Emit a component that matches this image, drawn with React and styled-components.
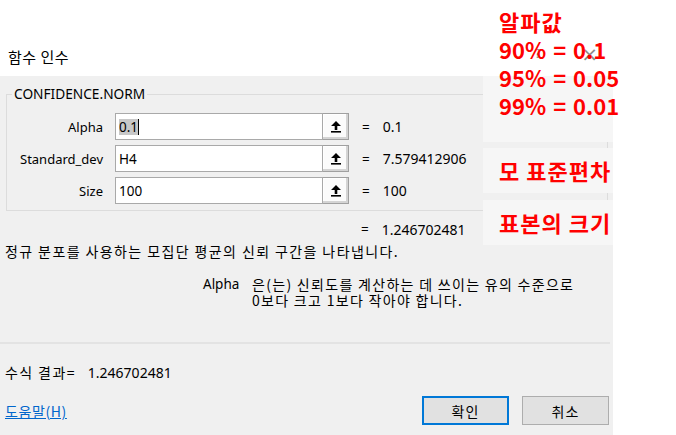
import React from "react";
import styled, { createGlobalStyle } from "styled-components";

const GlobalStyle = createGlobalStyle`
  html, body {
    margin: 0;
    padding: 0;
    background: #ffffff;
  }
  body {
    font-family: "Noto Sans", "Noto Sans CJK KR", sans-serif;
    font-size: 13px;
    color: #000000;
  }
`;

const args = [
  { label: "Alpha", input: "0.1", value: "0.1", selected: true },
  { label: "Standard_dev", input: "H4", value: "7.579412906" },
  { label: "Size", input: "100", value: "100" },
];

const ArrowIcon = () => (
  <svg width="12" height="13" viewBox="0 0 12 13">
    <path d="M6 1 L11 6 L7.3 6 L7.3 10 L4.7 10 L4.7 6 L1 6 Z" fill="#000" />
    <rect x="1" y="11" width="10" height="1.6" fill="#000" />
  </svg>
);

const App = () => {
  return (
    <React.Fragment>
      <GlobalStyle />
      <Page>
        <Dialog>
          <TitleBar>
            <Title>함수 인수</Title>
            <TitleButtons>
              <TitleIcon>?</TitleIcon>
              <TitleIcon $close>×</TitleIcon>
            </TitleButtons>
          </TitleBar>
          <Body>
            <GroupBox>
              <Legend>CONFIDENCE.NORM</Legend>
              <Rows>
                {args.map((a) => (
                  <ArgRow key={a.label}>
                    <ArgLabel>{a.label}</ArgLabel>
                    <InputBox>
                      <InputText $selected={a.selected}>{a.input}</InputText>
                      {a.selected && <Caret />}
                    </InputBox>
                    <RefButton>
                      <ArrowIcon />
                    </RefButton>
                    <Equals>=</Equals>
                    <ArgValue>{a.value}</ArgValue>
                  </ArgRow>
                ))}
              </Rows>
            </GroupBox>
            <ResultRow>
              <Equals>=</Equals>
              <ArgValue>1.246702481</ArgValue>
            </ResultRow>
            <Description>정규 분포를 사용하는 모집단 평균의 신뢰 구간을 나타냅니다.</Description>
            <HelpBlock>
              <HelpName>Alpha</HelpName>
              <HelpText>
                은(는) 신뢰도를 계산하는 데 쓰이는 유의 수준으로
                <br />
                0보다 크고 1보다 작아야 합니다.
              </HelpText>
            </HelpBlock>
            <Separator />
            <FormulaResult>
              수식 결과=<FormulaValue>1.246702481</FormulaValue>
            </FormulaResult>
            <Footer>
              <HelpLink href="#">도움말(H)</HelpLink>
              <Buttons>
                <DialogButton $primary>확인</DialogButton>
                <DialogButton>취소</DialogButton>
              </Buttons>
            </Footer>
          </Body>
        </Dialog>

        <NoteBox style={{ top: 76, height: 66 }} />
        <NoteBox style={{ top: 148, height: 45 }} />
        <NoteBox style={{ top: 200, height: 45 }} />

        <Notes style={{ top: 7 }}>
          <NoteLine>알파값</NoteLine>
          <NoteLine $numbers>90% = 0.1</NoteLine>
          <NoteLine $numbers>95% = 0.05</NoteLine>
          <NoteLine $numbers>99% = 0.01</NoteLine>
        </Notes>
        <Notes style={{ top: 156 }}>
          <NoteLine>모 표준편차</NoteLine>
        </Notes>
        <Notes style={{ top: 208 }}>
          <NoteLine>표본의 크기</NoteLine>
        </Notes>
      </Page>
    </React.Fragment>
  );
};

// Styled components
const Page = styled.div`
  position: relative;
  width: 676px;
  height: 435px;
  overflow: hidden;
  background: #ffffff;
`;

const Dialog = styled.div`
  width: 613px;
  height: 435px;
  display: flex;
  flex-direction: column;
`;

const TitleBar = styled.div`
  height: 76px;
  box-sizing: border-box;
  display: flex;
  align-items: flex-end;
  padding: 0 0 9px 8px;
  background: #ffffff;
`;

const Title = styled.div`
  font-family: "Noto Sans CJK KR", sans-serif;
  font-size: 15px;
  letter-spacing: 0.5px;
  line-height: 20px;
`;

const TitleButtons = styled.div`
  margin-left: auto;
  display: flex;
  gap: 40px;
  padding-right: 15px;
  margin-bottom: 4px;
`;

const TitleIcon = styled.span`
  font-family: "DejaVu Sans", sans-serif;
  font-size: ${(p) => (p.$close ? "20px" : "13px")};
  line-height: 18px;
  color: #8a8a8a;
`;

const Body = styled.div`
  flex: 1;
  background: #f0f0f0;
  display: flex;
  flex-direction: column;
  padding: 9px 0 0 0;
`;

const GroupBox = styled.fieldset`
  margin: 0 5px 0 6px;
  padding: 0 0 6px 0;
  border: 1px solid #dcdcdc;
  min-width: 0;
`;

const Legend = styled.legend`
  margin-left: 5px;
  padding: 0 2px;
  font-size: 13.7px;
  line-height: 18px;
  color: #000;
`;

const Rows = styled.div`
  display: flex;
  flex-direction: column;
  gap: 5px;
  padding-top: 10px;
`;

const ArgRow = styled.div`
  display: flex;
  align-items: center;
  height: 27px;
`;

const ArgLabel = styled.div`
  width: 96px;
  text-align: right;
  margin-right: 12px;
  font-size: 13px;
`;

const InputBox = styled.div`
  width: 208px;
  height: 27px;
  box-sizing: border-box;
  border: 1px solid #a9a9a9;
  background: #ffffff;
  display: flex;
  align-items: center;
  padding-left: 3px;
`;

const InputText = styled.span`
  font-size: 13.5px;
  line-height: 16px;
  background: ${(p) => (p.$selected ? "#c8c8c8" : "transparent")};
`;

const Caret = styled.span`
  width: 1px;
  height: 16px;
  background: #000;
`;

const RefButton = styled.div`
  width: 26px;
  height: 27px;
  box-sizing: border-box;
  border: 1px solid #a0a0a0;
  border-left: none;
  background: #fbfbfb;
  box-shadow: inset -2px -2px 0 #d4d4d4, inset 1px 1px 0 #ffffff;
  display: flex;
  align-items: center;
  justify-content: center;
`;

const Equals = styled.span`
  margin: 0 13px 0 13px;
  font-size: 13.5px;
`;

const ArgValue = styled.span`
  font-size: 14px;
  color: #000;
`;

const ResultRow = styled.div`
  display: flex;
  align-items: center;
  padding-left: 348px;
  margin-top: 9px;
  height: 18px;
`;

const Description = styled.div`
  margin-top: 4px;
  padding-left: 5px;
  font-family: "Noto Sans CJK KR", sans-serif;
  font-size: 14px;
  letter-spacing: 1.4px;
  line-height: 18px;
`;

const HelpBlock = styled.div`
  display: flex;
  margin-top: 16px;
  padding-left: 203px;
  font-family: "Noto Sans CJK KR", sans-serif;
  font-size: 14px;
  line-height: 16px;
`;

const HelpName = styled.div`
  width: 49px;
  font-family: "Noto Sans", sans-serif;
  font-size: 13.5px;
`;

const HelpText = styled.div`
  letter-spacing: 1.3px;
`;

const Separator = styled.div`
  margin: 34px 3px 0 0;
  height: 2px;
  background: #e3e3e3;
`;

const FormulaResult = styled.div`
  margin-top: 19px;
  padding-left: 5px;
  font-family: "Noto Sans CJK KR", sans-serif;
  font-size: 14px;
  letter-spacing: 1.4px;
  line-height: 18px;
`;

const FormulaValue = styled.span`
  margin-left: 12px;
  font-family: "Noto Sans", sans-serif;
  letter-spacing: 0;
`;

const Footer = styled.div`
  display: flex;
  align-items: center;
  margin-top: 14px;
  padding: 0 4px 0 5px;
`;

const HelpLink = styled.a`
  font-family: "Noto Sans CJK KR", sans-serif;
  font-size: 14px;
  letter-spacing: 0.6px;
  color: #0066cc;
  text-decoration: underline;
`;

const Buttons = styled.div`
  margin-left: auto;
  display: flex;
  gap: 13px;
`;

const DialogButton = styled.button`
  width: 87px;
  height: 29px;
  box-sizing: border-box;
  background: #e1e1e1;
  border: ${(p) => (p.$primary ? "2px solid #0078d7" : "1px solid #adadad")};
  font-family: "Noto Sans CJK KR", sans-serif;
  font-size: 14px;
  letter-spacing: 1px;
  color: #000;
  padding: 0;
`;

const NoteBox = styled.div`
  position: absolute;
  left: 483px;
  width: 130px;
  background: #f6f6f6;
`;

const Notes = styled.div`
  position: absolute;
  left: 499px;
  display: flex;
  flex-direction: column;
`;

const NoteLine = styled.div`
  font-family: "Noto Sans CJK KR", sans-serif;
  font-weight: 700;
  font-size: 22px;
  line-height: 28px;
  letter-spacing: ${(p) => (p.$numbers ? "0" : "1px")};
  word-spacing: ${(p) => (p.$numbers ? "2px" : "0")};
  color: #ff0000;
  white-space: pre;
`;

export default App;
